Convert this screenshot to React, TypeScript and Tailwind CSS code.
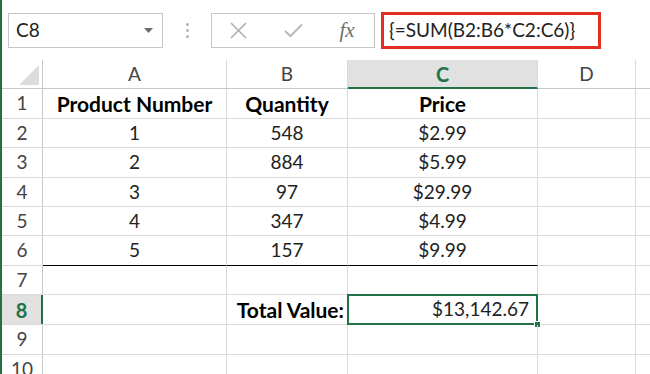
import React from "react"

const font = { fontFamily: "Lato, 'Liberation Sans', sans-serif" }

const widths = [
  "w-[41px] shrink-0",
  "w-[184px] shrink-0",
  "w-[121px] shrink-0",
  "w-[190px] shrink-0",
  "w-[98px] shrink-0",
  "w-[30px] shrink-0",
]

type Row = {
  n: string
  h: string
  a?: string
  b?: string
  c?: string
  bold?: boolean
  underline?: boolean
}

const rows: Row[] = [
  { n: "1", h: "h-[30px]", a: "Product Number", b: "Quantity", c: "Price", bold: true },
  { n: "2", h: "h-[29px]", a: "1", b: "548", c: "$2.99" },
  { n: "3", h: "h-[30px]", a: "2", b: "884", c: "$5.99" },
  { n: "4", h: "h-[29px]", a: "3", b: "97", c: "$29.99" },
  { n: "5", h: "h-[29px]", a: "4", b: "347", c: "$4.99" },
  { n: "6", h: "h-[30px]", a: "5", b: "157", c: "$9.99", underline: true },
  { n: "7", h: "h-[29px]" },
  { n: "8", h: "h-[30px]" },
  { n: "9", h: "h-[30px]" },
  { n: "10", h: "h-[30px]" },
]

function Toolbar() {
  return (
    <div className="flex h-[60px] items-start pt-[13px] pl-[6px]">
      <div className="flex h-[35px] w-[155px] shrink-0 items-center justify-between border border-[#c6c6c6] pl-[7px] pr-[9px]">
        <span className="text-[19px] text-[#222]">C8</span>
        <svg width="9" height="5" viewBox="0 0 9 5">
          <polygon points="0,0 9,0 4.5,5" fill="#6b6b6b" />
        </svg>
      </div>
      <div className="flex h-[35px] w-[48px] shrink-0 flex-col items-center justify-center gap-[3px]">
        <span className="h-[3px] w-[3px] rounded-full bg-[#b4b4b4]" />
        <span className="h-[3px] w-[3px] rounded-full bg-[#b4b4b4]" />
        <span className="h-[3px] w-[3px] rounded-full bg-[#b4b4b4]" />
      </div>
      <div className="flex h-[35px] w-[164px] shrink-0 items-center border border-[#c6c6c6]">
        <div className="flex w-[52px] justify-center">
          <svg width="17" height="17" viewBox="0 0 17 17">
            <path d="M1 1 L16 16 M16 1 L1 16" stroke="#b0b0b0" strokeWidth="1.6" />
          </svg>
        </div>
        <div className="flex w-[58px] justify-center">
          <svg width="19" height="15" viewBox="0 0 19 15">
            <path d="M1 8 L6.5 13 L18 1.5" stroke="#b8b8b8" strokeWidth="2" fill="none" />
          </svg>
        </div>
        <div className="flex w-[50px] justify-center">
          <span className="text-[21px] italic text-[#6e6e6e]" style={{ fontFamily: "'Liberation Serif', serif" }}>
            fx
          </span>
        </div>
      </div>
      <div className="ml-[6px] -mt-px flex h-[37px] w-[220px] shrink-0 items-center border-[3px] border-[#e1301f] pl-[5px]">
        <span className="text-[19px] text-[#222]">{"{=SUM(B2:B6*C2:C6)}"}</span>
      </div>
    </div>
  )
}

function HeaderRow() {
  return (
    <div className="flex h-[29px] border-b border-[#c8c8c8]">
      <div className={`${widths[0]} relative border-r border-[#c8c8c8]`}>
        <svg className="absolute right-[3px] bottom-[3px]" width="20" height="20" viewBox="0 0 20 20">
          <polygon points="20,0 20,20 0,20" fill="#dcdcdc" />
        </svg>
      </div>
      <div className={`${widths[1]} flex items-center justify-center border-r border-[#dadada] text-[19px] text-[#444]`}>A</div>
      <div className={`${widths[2]} flex items-center justify-center border-r border-[#dadada] text-[19px] text-[#444]`}>B</div>
      <div className={`${widths[3]} -mb-px flex items-center justify-center border-r border-b-2 border-r-[#dadada] border-b-[#217346] bg-[#e1e1e1] text-[20px] font-bold text-[#217346]`}>
        C
      </div>
      <div className={`${widths[4]} flex items-center justify-center border-r border-[#dadada] text-[19px] text-[#444]`}>D</div>
      <div className={`${widths[5]}`} />
    </div>
  )
}

function DataRow({ r }: { r: Row }) {
  const sel = r.n === "8"
  const text = r.bold ? "text-[21px] font-bold text-black" : "text-[19px] text-[#222]"
  return (
    <div className={`flex ${r.h} border-b border-[#dadada]`}>
      <div
        className={`${widths[0]} flex items-center justify-center ${
          sel
            ? "border-r-2 border-[#217346] bg-[#e1e1e1] text-[20px] font-bold text-[#217346]"
            : "border-r border-[#c8c8c8] text-[19px] text-[#444]"
        }`}
      >
        {r.n}
      </div>
      <div className={`${widths[1]} flex items-center justify-center border-r border-[#dadada] ${text} ${r.underline ? "-mb-px border-b border-b-black" : ""}`}>
        {r.a}
      </div>
      <div
        className={`${widths[2]} flex items-center border-r border-[#dadada] ${
          sel ? "justify-end pr-[3px] text-[21px] font-bold text-black" : `justify-center ${text}`
        } ${r.underline ? "-mb-px border-b border-b-black" : ""}`}
      >
        {sel ? "Total Value:" : r.b}
      </div>
      <div
        className={`${widths[3]} relative flex items-center border-r border-[#dadada] ${text} ${
          sel ? "justify-end pr-[8px]" : "justify-center"
        } ${r.underline ? "-mb-px border-b border-b-black" : ""}`}
      >
        {sel ? "$13,142.67" : r.c}
        {sel && (
          <>
            <div className="absolute -top-px -left-px -right-[1px] -bottom-px border-2 border-[#217346]" />
            <div className="absolute -right-[4px] -bottom-[4px] h-[7px] w-[7px] border border-white bg-[#217346]" />
          </>
        )}
      </div>
      <div className={`${widths[4]} border-r border-[#dadada]`} />
      <div className={`${widths[5]}`} />
    </div>
  )
}

export default function App() {
  return (
    <div className="h-[374px] w-[650px] overflow-hidden border-l-2 border-[#217346] bg-white" style={font}>
      <Toolbar />
      <HeaderRow />
      {rows.map((r) => (
        <DataRow key={r.n} r={r} />
      ))}
    </div>
  )
}
